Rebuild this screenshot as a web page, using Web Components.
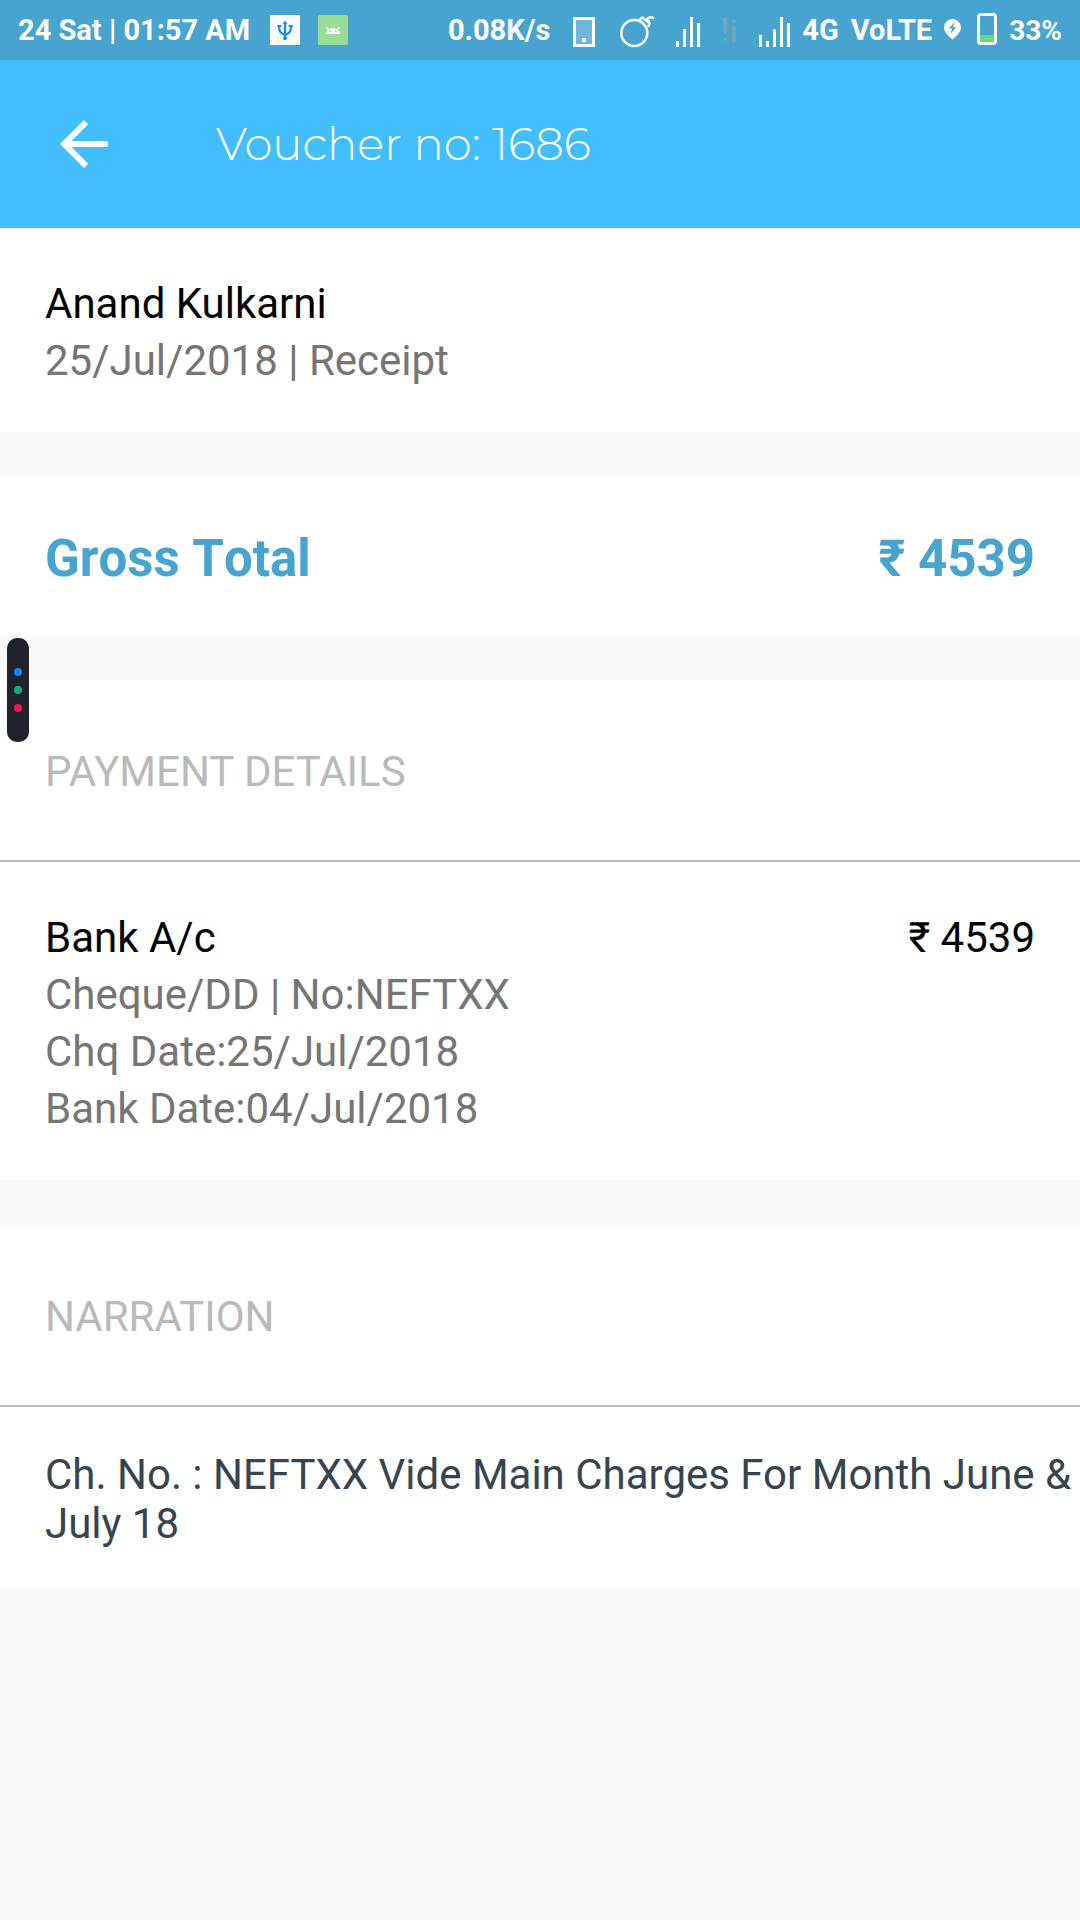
<!DOCTYPE html>
<html lang="en">
<head>
<meta charset="utf-8">
<meta name="viewport" content="width=device-width, initial-scale=1">
<title>Voucher no: 1686</title>
<style>
  body { margin: 0; min-height: 100vh; background: #fafafa; font-family: Roboto, "Noto Sans", sans-serif; }
</style>
</head>
<body>
<voucher-screen></voucher-screen>

<script>
class BaseElement extends HTMLElement {
  constructor() {
    super();
    this.attachShadow({ mode: "open" }).innerHTML = this.constructor.markup;
  }
}

customElements.define("status-bar", class extends BaseElement {
  static markup = `
    <style>
      :host { display: flex; justify-content: space-between; align-items: flex-start; box-sizing: border-box;
        height: 60px; padding: 0 18px; background: #46a4cf; color: #fff;
        font-size: 29px; font-weight: 700; line-height: 61px; white-space: nowrap; }
      .group { display: flex; gap: 20px; }
      .icons { gap: 18px; }
      .wide { gap: 23px; }
      .tight { gap: 12px; }
      .power { gap: 16px; }
      .level { font-size: 28px; }
      svg { display: block; height: 60px; flex: none; overflow: visible; }
    </style>
    <div class="group">
      <span>24 Sat | 01:57 AM</span>
      <div class="group icons">
        <svg width="30" viewBox="0 0 30 60" aria-hidden="true">
          <rect y="15" width="30" height="30" fill="#fafafa"/>
          <g fill="none" stroke="#0f8cff" stroke-width="2.2">
            <path d="M15 22V39M9.200 26v2.500c0 4 3 5.500 5.800 6.500M20.800 26v2.500c0 4-3 5.500-5.800 6.500"/>
            <path d="M7.300 26h4M18.700 26h4" stroke-width="2"/>
          </g>
          <path d="M15 20.500l2.300 3.500h-4.600z" fill="#0f8cff"/>
          <circle cx="15" cy="38.300" r="1.900" fill="#0f8cff"/>
        </svg>
        <svg width="30" viewBox="0 0 30 60" aria-hidden="true">
          <rect y="15" width="30" height="30" rx="1.500" fill="#99dd99"/>
          <path d="M8 34c0-3.500 3-5.800 7-5.800s7 2.300 7 5.800z" fill="#fff"/>
          <path d="M8.600 27.200l2.200 2.600M21.400 27.200l-2.200 2.600" stroke="#fff" stroke-width="1.200"/>
          <circle cx="12.300" cy="31" r="1" fill="#99dd99"/><circle cx="17.700" cy="31" r="1" fill="#99dd99"/>
        </svg>
      </div>
    </div>
    <div class="group tight">
      <div class="group wide">
        <span>0.08K/s</span>
        <svg width="22" viewBox="0 0 22 60" aria-hidden="true">
          <rect x="1.500" y="18.500" width="19" height="27" fill="#6fb7da" stroke="#fff" stroke-width="3"/>
          <rect x="9" y="38" width="4" height="4" fill="#fff"/>
        </svg>
        <svg width="35" viewBox="-2 0 35 60" aria-hidden="true" fill="none" stroke="#fff" stroke-width="2.500" stroke-linejoin="round">
          <circle cx="14.300" cy="33" r="13"/>
          <path d="M19 21L22 17.500L29.500 23L28.300 27M25.500 19.500c1 1.500 2.500 2 4.500 2M26.500 20.500C28 17 30.500 16.500 34.200 18.500" />
        </svg>
        <svg width="24" viewBox="0 0 24 60" fill="#fff" aria-hidden="true">
          <path d="M0 41h3v6H0zM7 29h3v18H7zM14 17h3v30h-3zM21 23h3v24h-3z"/>
        </svg>
        <svg width="13" viewBox="0 0 13 60" fill="#75a5b9" aria-hidden="true">
          <rect y="17" width="4" height="17" rx="2"/><circle cx="2" cy="39" r="2"/>
          <circle cx="11" cy="21" r="2"/><rect x="9" y="26" width="4" height="17" rx="2"/>
        </svg>
        <svg width="31" viewBox="0 0 31 60" fill="#fff" aria-hidden="true">
          <path d="M0 35h3v12H0zM7 41h3v6H7zM14 29h3v18h-3zM21 17h3v30h-3zM28 23h3v24h-3z"/>
        </svg>
      </div>
      <span>4G</span>
      <span>VoLTE</span>
      <div class="group power">
        <svg width="17" viewBox="0 0 17 60" aria-hidden="true">
          <path d="M8.500 19a8.500 8.500 0 0 1 8.500 8.500c0 4-3 7.500-8.500 12C3 35 0 31.500 0 27.500A8.500 8.500 0 0 1 8.500 19z" fill="#fff"/>
          <path d="M10.300 22.300L4.800 28.500h3.400l-1.500 5 5.600-6.200H8.900z" fill="#46a4cf"/>
        </svg>
        <svg width="20" viewBox="0 0 20 60" aria-hidden="true">
          <rect x="1.500" y="14.500" width="17" height="29" rx="2.500" fill="none" stroke="#fff" stroke-width="3"/>
          <rect x="3" y="35" width="14" height="7" fill="#66dd77"/>
        </svg>
      </div>
      <span class="level">33%</span>
    </div>`;
});

customElements.define("app-bar", class extends BaseElement {
  static markup = `
    <style>
      :host { display: flex; align-items: center; gap: 96px; box-sizing: border-box;
        height: 168px; padding: 0 48px; background: #43befd; color: #fff; }
      button { display: block; width: 72px; height: 72px; padding: 0; border: 0; background: none; color: inherit; }
      svg { display: block; width: 72px; height: 72px; }
      h1 { margin: 0; font: 300 45px/56px Montserrat, Inter, sans-serif; }
    </style>
    <button type="button" aria-label="Back">
      <svg viewBox="0 0 24 24" fill="currentColor"><path d="M20 11H7.830l5.590-5.590L12 4l-8 8 8 8 1.410-1.410L7.830 13H20v-2z"/></svg>
    </button>
    <h1><slot></slot></h1>`;
});

customElements.define("info-card", class extends BaseElement {
  static markup = `
    <style>
      :host { display: flex; justify-content: space-between; align-items: flex-start; gap: 24px;
        padding: 47px 45px 43px; background: #fff; color: #757575; font-size: 42px; line-height: 57px; }
      :host([emphasis]) { padding: 48px 45px 42px; color: #46a4cf; font-size: 51px; font-weight: 700; line-height: 68px; font-kerning: none; }
      .amount { white-space: nowrap; }
      ::slotted(*) { margin: 0; }
      ::slotted(h2) { color: #000; font-size: inherit; font-weight: inherit; }
      ::slotted([slot=amount]) { color: #000; }
      :host([emphasis]) ::slotted(*) { color: inherit; }
    </style>
    <div><slot></slot></div>
    <div class="amount"><slot name="amount"></slot></div>`;
});

customElements.define("section-heading", class extends BaseElement {
  static markup = `
    <style>
      :host { display: block; padding: 63px 45px 60px; background: #fff; border-bottom: 2px solid #b8baba; }
      h2 { margin: 0; color: #b8baba; font-size: 42px; font-weight: 400; line-height: 57px; }
    </style>
    <h2><slot></slot></h2>`;
});

customElements.define("narration-text", class extends BaseElement {
  static markup = `
    <style>
      :host { display: block; padding: 43px 0 39px 45px; background: #fff; }
      p { margin: 0; color: #36444f; font-size: 42px; line-height: 49px; }
    </style>
    <p><slot></slot></p>`;
});

customElements.define("edge-handle", class extends BaseElement {
  static markup = `
    <style>
      :host { position: absolute; left: 7px; top: 638px; box-sizing: border-box; width: 22px; height: 104px;
        display: flex; flex-direction: column; align-items: center; justify-content: center; gap: 10px;
        border-radius: 10px; background: #1f212b; }
      i { width: 8px; height: 8px; border-radius: 50%; background: #1586fb; }
      i:nth-of-type(2) { background: #09b37b; }
      i:nth-of-type(3) { background: #f9154f; }
    </style>
    <i></i><i></i><i></i>`;
});

customElements.define("voucher-screen", class extends BaseElement {
  static markup = `
    <style>
      :host { display: block; position: relative; }
      main { display: flex; flex-direction: column; gap: 45px; }
    </style>
    <status-bar></status-bar>
    <app-bar>Voucher no: 1686</app-bar>
    <main>
      <info-card>
        <h2>Anand Kulkarni</h2>
        <p>25/Jul/2018 | Receipt</p>
      </info-card>
      <info-card emphasis>
        <h2>Gross Total</h2>
        <span slot="amount">₹ 4539</span>
      </info-card>
      <section>
        <section-heading>PAYMENT DETAILS</section-heading>
        <info-card>
          <h2>Bank A/c</h2>
          <p>Cheque/DD | No:NEFTXX</p>
          <p>Chq Date:25/Jul/2018</p>
          <p>Bank Date:04/Jul/2018</p>
          <span slot="amount">₹ 4539</span>
        </info-card>
      </section>
      <section>
        <section-heading>NARRATION</section-heading>
        <narration-text>Ch. No. : NEFTXX Vide Main Charges For Month June &amp; July 18</narration-text>
      </section>
    </main>
    <edge-handle></edge-handle>`;
});
</script>
</body>
</html>
